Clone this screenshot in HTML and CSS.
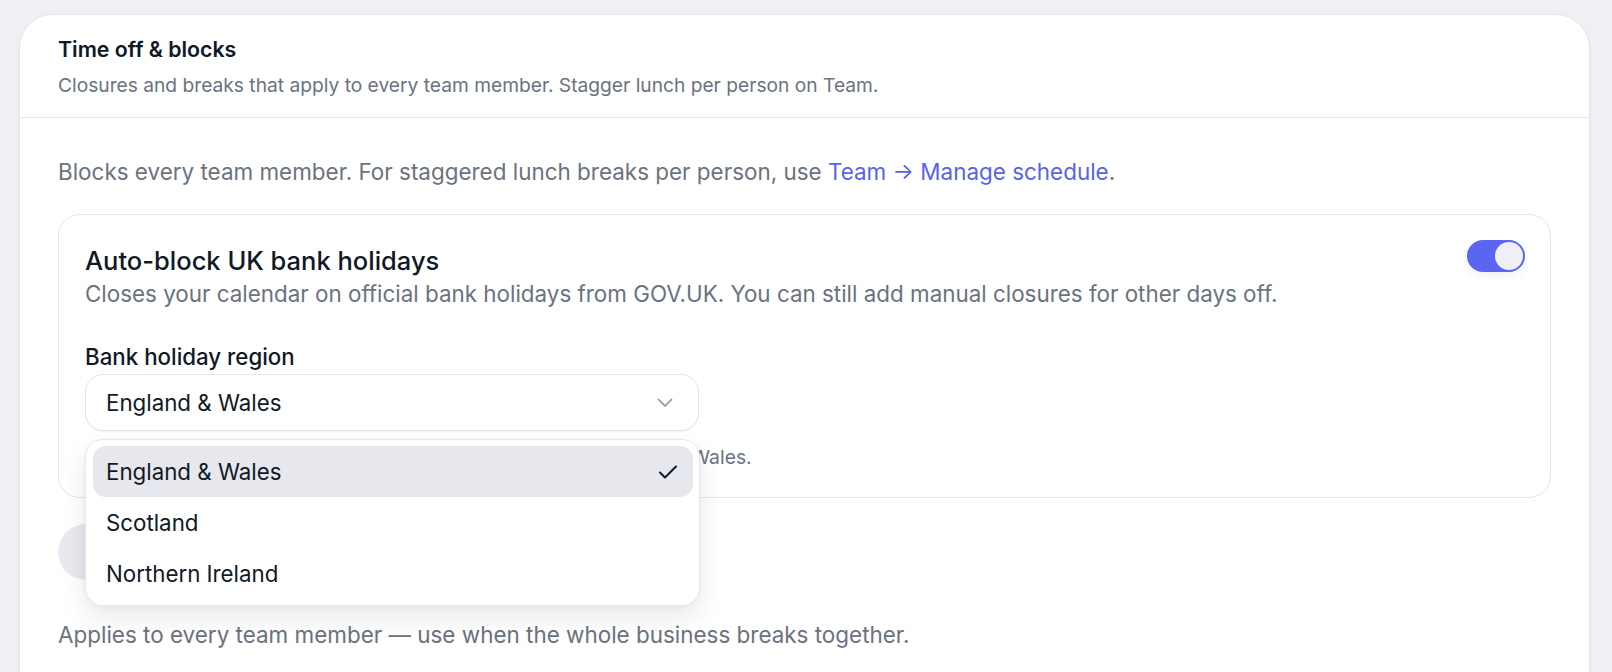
FILE: index.html
```html
<!DOCTYPE html>
<html lang="en">
<head>
  <meta charset="UTF-8">
  <meta name="viewport" content="width=device-width, initial-scale=1.0">
  <title>Time off &amp; blocks</title>
  <link rel="stylesheet" href="styles.css">
</head>
<body>
  <section class="panel">
    <header class="panel-head">
      <h1 class="panel-title">Time off &amp; blocks</h1>
      <p class="panel-sub">Closures and breaks that apply to every team member. Stagger lunch per person on Team.</p>
    </header>

    <div class="panel-body">
      <p class="note">Blocks every team member. For staggered lunch breaks per person, use <a href="#" class="link">Team → Manage schedule</a>.</p>

      <!-- Bank holidays -->
      <div class="holiday-card">
        <div class="holiday-top">
          <div>
            <h2 class="holiday-title">Auto-block UK bank holidays</h2>
            <p class="holiday-desc">Closes your calendar on official bank holidays from GOV.UK. You can still add manual closures for other days off.</p>
          </div>
          <button class="toggle on" aria-label="Auto-block UK bank holidays"><span class="knob"></span></button>
        </div>

        <label class="field-label">Bank holiday region</label>
        <div class="select-wrap">
          <button class="select">
            <span>England &amp; Wales</span>
            <svg class="chevron" width="16" height="10" viewBox="0 0 16 10" fill="none">
              <path d="M1.5 1.5l6.5 6.5 6.5-6.5" stroke="#8b919c" stroke-width="1.7" stroke-linecap="round" stroke-linejoin="round"/>
            </svg>
          </button>

          <ul class="menu">
            <li class="menu-item active">
              England &amp; Wales
              <svg width="20" height="16" viewBox="0 0 20 16" fill="none">
                <path d="M2 8.5l5 5L18 2.5" stroke="#111827" stroke-width="2" stroke-linecap="round" stroke-linejoin="round"/>
              </svg>
            </li>
            <li class="menu-item">Scotland</li>
            <li class="menu-item">Northern Ireland</li>
          </ul>
        </div>
        <p class="hint">Only bank holidays for the selected region are blocked: England &amp; Wales.</p>
      </div>

      <button class="add-btn">+ Add closure</button>

      <p class="note last">Applies to every team member — use when the whole business breaks together.</p>
    </div>
  </section>
</body>
</html>
```

FILE: styles.css
```css
* {
  margin: 0;
  padding: 0;
  box-sizing: border-box;
}

body {
  font-family: 'Inter', 'Noto Sans', sans-serif;
  background-color: #eff0f4;
  color: #111827;
  padding: 14px 22px 0 19px;
  height: 100vh;
  overflow: hidden;
}

.panel {
  background: #fff;
  border: 1px solid #e4e6eb;
  border-radius: 34px 34px 0 0;
  min-height: 720px;
  box-shadow: 0 1px 3px rgba(15, 23, 42, 0.04);
}

.panel-head {
  padding: 21px 38px 19px;
  border-bottom: 1px solid #e5e7eb;
}

.panel-title {
  font-size: 21.3px;
  font-weight: 600;
  line-height: 26px;
}

.panel-sub {
  margin-top: 10px;
  font-size: 19.2px;
  line-height: 26px;
  color: #6b7280;
}

.panel-body {
  padding: 39px 38px 0 38px;
}

.note {
  font-size: 22.45px;
  line-height: 30px;
  color: #6b7280;
}

.link {
  color: #5863e8;
  text-decoration: none;
}

/* Bank holiday card */
.holiday-card {
  margin-top: 27px;
  border: 1px solid #e4e6eb;
  border-radius: 22px;
  padding: 25px 25px 27px 26px;
}

.holiday-top {
  display: flex;
  justify-content: space-between;
  align-items: flex-start;
}

.holiday-title {
  margin-top: 5px;
  font-size: 25.5px;
  font-weight: 500;
  line-height: 32px;
}

.holiday-desc {
  margin-top: 2px;
  font-size: 22.4px;
  line-height: 30px;
  color: #6b7280;
}

.toggle {
  flex-shrink: 0;
  width: 58px;
  height: 32px;
  border: none;
  border-radius: 16px;
  background: #e5e7eb;
  display: flex;
  align-items: center;
  padding: 2px;
  box-shadow: 0 4px 10px rgba(15, 23, 42, 0.06);
}

.toggle.on {
  background: #5a66f1;
  justify-content: flex-end;
}

.knob {
  width: 28px;
  height: 28px;
  border-radius: 50%;
  background: #eef0f6;
}

.field-label {
  display: block;
  margin-top: 33px;
  font-size: 22.3px;
  font-weight: 500;
  line-height: 30px;
}

.select-wrap {
  position: relative;
  width: 614px;
  margin-top: 2px;
}

.select {
  width: 100%;
  height: 57px;
  display: flex;
  justify-content: space-between;
  align-items: center;
  padding: 0 25px 0 20px;
  background: #fff;
  border: 1px solid #e4e6eb;
  border-radius: 18px;
  box-shadow: 0 1px 2px rgba(15, 23, 42, 0.05);
  font-family: inherit;
  font-size: 22.3px;
  color: #111827;
}

/* Open dropdown list */
.menu {
  position: absolute;
  top: 65px;
  left: 0;
  width: 615px;
  list-style: none;
  background: #fff;
  border: 1px solid #e6e8ec;
  border-radius: 18px;
  padding: 6px 6px 6px 7px;
  box-shadow: 0 12px 28px rgba(15, 23, 42, 0.09), 0 2px 6px rgba(15, 23, 42, 0.04);
  z-index: 10;
}

.menu-item {
  height: 51px;
  display: flex;
  justify-content: space-between;
  align-items: center;
  padding: 0 15px 0 13px;
  border-radius: 13px;
  font-size: 22.3px;
  color: #111827;
}

.menu-item.active {
  background: #e6e8ee;
}

.hint {
  margin-top: 13px;
  font-size: 19.35px;
  line-height: 26px;
  color: #6b7280;
}

.add-btn {
  margin-top: 26px;
  height: 56px;
  padding: 0 28px;
  border: none;
  border-radius: 28px;
  background: #e8eaef;
  font-family: inherit;
  font-size: 20px;
  font-weight: 500;
  color: #111827;
}

.note.last {
  margin-top: 40px;
}
```
